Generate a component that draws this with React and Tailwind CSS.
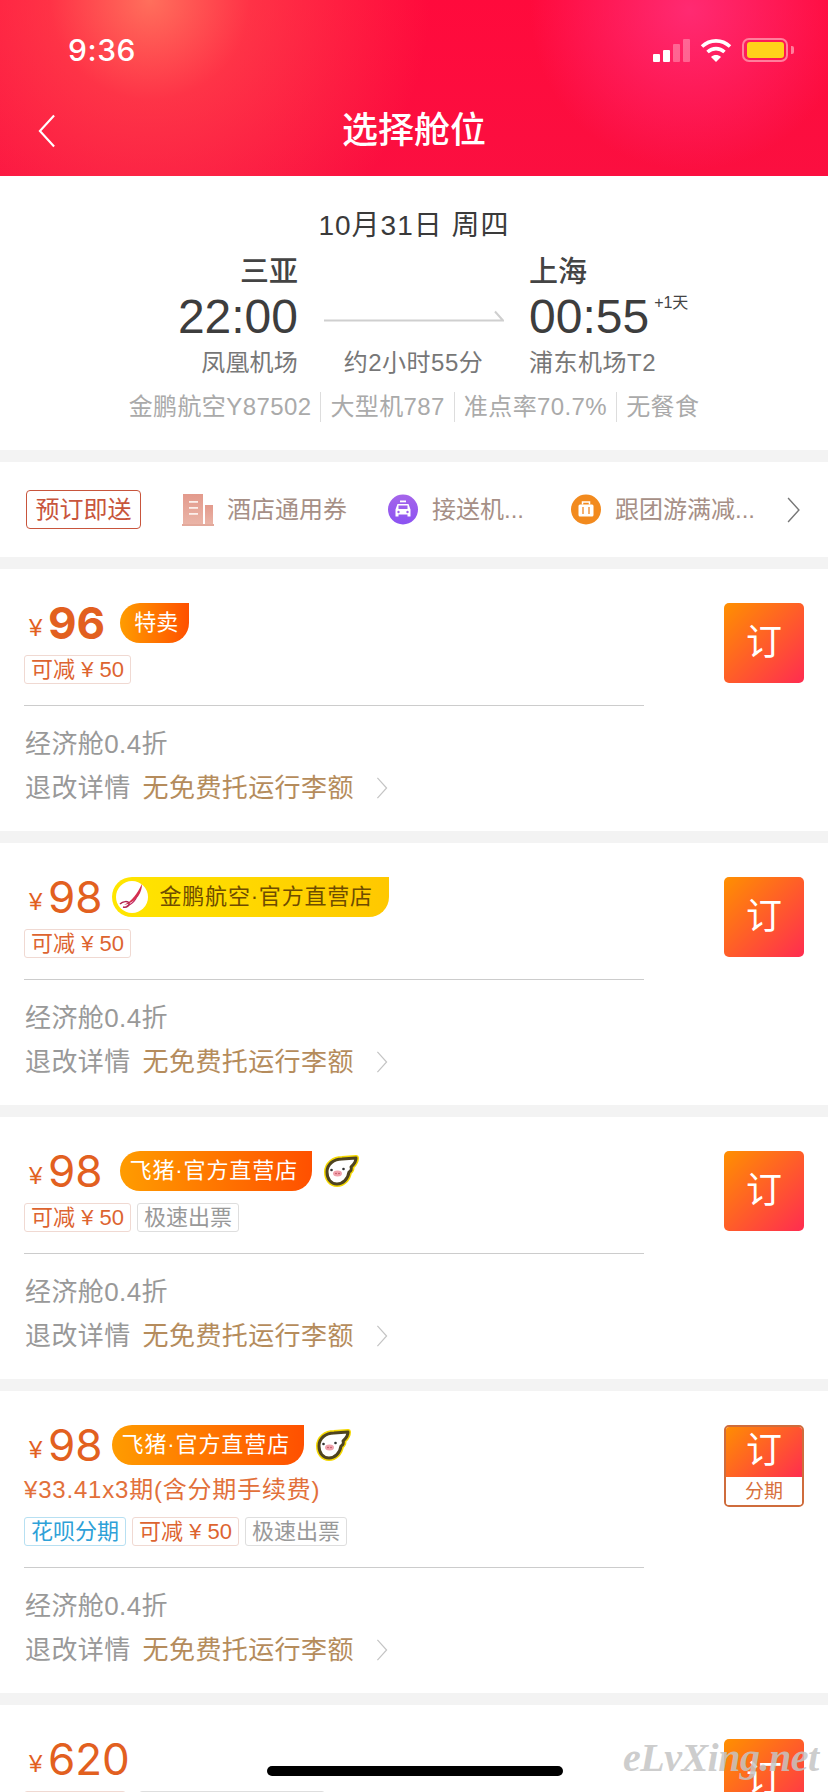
const SANS = "font-['Liberation_Sans','Noto_Sans_CJK_SC',sans-serif]";

function Chevron({ className, color, width = 1.6 }) {
  return (
    <svg viewBox="0 0 12 24" className={className} fill="none" stroke={color} strokeWidth={width}>
      <path d="M1 1l10 11L1 23" />
    </svg>
  );
}

function StatusIcons() {
  return (
    <div className="flex items-center">
      <svg width="37" height="23" viewBox="0 0 37 23" fill="#fff">
        <rect x="0" y="15" width="7" height="8" rx="1" />
        <rect x="10" y="11" width="7" height="12" rx="1" />
        <rect x="20" y="5" width="7" height="18" rx="1" opacity="0.3" />
        <rect x="30" y="0" width="7" height="23" rx="1" opacity="0.3" />
      </svg>
      <svg width="32" height="24" viewBox="0 0 32 24" fill="none" stroke="#fff" strokeWidth="3.6" className="ml-[10px]">
        <path d="M2 8.500C10 1 22 1 30 8.500" />
        <path d="M7.500 14C12.500 9.500 19.500 9.500 24.500 14" />
        <path d="M16 24l-5-5c3-2.600 7-2.600 10 0z" fill="#fff" stroke="none" />
      </svg>
      <div className="ml-[10px] flex items-center">
        <div className="flex h-[24px] w-[46px] items-center justify-center rounded-[7px] border-2 border-[#ff7f9c]">
          <div className="h-[16px] w-[37px] rounded-[3px] bg-[#ffd21a]" />
        </div>
        <div className="ml-[3px] h-[8px] w-[3px] rounded-r-[2px] bg-[#ff7f9c]" />
      </div>
    </div>
  );
}

function Header() {
  return (
    <div className="h-[176px] bg-[radial-gradient(circle_at_150px_0px,#ff6f5c_0,rgba(255,90,80,0.5)_100px,rgba(255,10,60,0)_280px),radial-gradient(circle_at_690px_10px,#ff2a72_0,rgba(255,10,60,0)_160px),linear-gradient(#ff0a3c,#fb0f40)]">
      <div className="flex h-[24px] translate-y-[38px] items-center justify-between pl-[68px] pr-[34px]">
        <span className="font-['Inter',sans-serif] text-[30px] font-medium leading-none tracking-[0.6px] text-white">9:36</span>
        <StatusIcons />
      </div>
      <div className="relative flex h-[88px] translate-y-[63px] items-center justify-center">
        <Chevron className="absolute left-[37px] top-[27px] h-[34px] w-[20px] -scale-x-100" color="#fff" width={1.5} />
        <span className={`${SANS} text-[36px] font-medium leading-none text-white`}>选择舱位</span>
      </div>
    </div>
  );
}

function FlightInfo() {
  const meta = ["金鹏航空Y87502", "大型机787", "准点率70.7%", "无餐食"];
  return (
    <div className={`${SANS} h-[274px] bg-white pt-[30px]`}>
      <div className="h-[40px] text-center text-[28px] leading-[40px] tracking-[1px] text-[#3a3a3a]">10月31日 周四</div>
      <div className="mt-[8px] flex">
        <div className="flex w-[298px] flex-col items-end">
          <div className="h-[36px] text-[29px] leading-[36px] font-medium text-[#444]">三亚</div>
          <div className="h-[54px] text-[48px] leading-[54px] text-[#3d3d3d]">22:00</div>
          <div className="mt-[2px] h-[34px] text-[24px] leading-[34px] tracking-[0.2px] text-[#777]">凤凰机场</div>
        </div>
        <div className="flex w-[231px] flex-col items-center">
          <svg width="180" height="14" viewBox="0 0 180 14" fill="none" stroke="#cfcfcf" strokeWidth="2" className="mt-[56px]">
            <path d="M0 10.500h179l-8-9" />
          </svg>
          <div className="mt-[22px] h-[34px] text-[24px] leading-[34px] tracking-[0.5px] text-[#777]">约2小时55分</div>
        </div>
        <div className="flex flex-col items-start">
          <div className="h-[36px] text-[29px] leading-[36px] font-medium text-[#444]">上海</div>
          <div className="flex h-[54px] items-start">
            <span className="text-[48px] leading-[54px] text-[#3d3d3d]">00:55</span>
            <span className="ml-[5px] mt-[3px] text-[16px] leading-[20px] text-[#444]">+1天</span>
          </div>
          <div className="mt-[2px] h-[34px] text-[24px] leading-[34px] tracking-[0.5px] text-[#777]">浦东机场T2</div>
        </div>
      </div>
      <div className="mt-[12px] flex h-[30px] items-center justify-center">
        {meta.map((m, i) => (
          <span
            key={m}
            className={`h-[30px] px-[9px] text-[24px] leading-[30px] tracking-[0.4px] text-[#aaa] ${i > 0 ? "border-l border-[#ddd]" : ""}`}
          >
            {m}
          </span>
        ))}
      </div>
    </div>
  );
}

function HotelIcon() {
  return (
    <svg width="32" height="32" viewBox="0 0 32 32" className="shrink-0">
      <defs>
        <linearGradient id="hotel" x1="0" y1="0" x2="0" y2="1">
          <stop offset="0" stopColor="#e39a8c" />
          <stop offset="1" stopColor="#eab5a8" />
        </linearGradient>
      </defs>
      <rect x="1" y="0" width="20" height="31" fill="url(#hotel)" />
      <rect x="23" y="11" width="8" height="20" fill="url(#hotel)" />
      <rect x="0" y="30" width="32" height="2" fill="#e3a99b" />
      <g fill="#fbeeea">
        <rect x="7" y="7" width="9" height="1.800" />
        <rect x="7" y="13" width="9" height="1.800" />
        <rect x="7" y="19" width="9" height="1.800" />
      </g>
    </svg>
  );
}

function CarIcon() {
  return (
    <svg width="30" height="31" viewBox="0 0 30 31" className="shrink-0">
      <defs>
        <linearGradient id="car" x1="0" y1="0" x2="0" y2="1">
          <stop offset="0" stopColor="#a565ea" />
          <stop offset="1" stopColor="#8b52f2" />
        </linearGradient>
      </defs>
      <circle cx="15" cy="15.500" r="15" fill="url(#car)" />
      <rect x="12" y="6.500" width="6" height="1.800" fill="#fff" />
      <path d="M9.500 10h11l2 5.500v7h-3v-2h-9v2h-3v-7z" fill="#fff" />
      <rect x="10.500" y="11.500" width="9" height="3.500" fill="#9d60ec" />
      <circle cx="10.500" cy="18" r="1.200" fill="#9d60ec" />
      <circle cx="19.500" cy="18" r="1.200" fill="#9d60ec" />
    </svg>
  );
}

function BagIcon() {
  return (
    <svg width="30" height="31" viewBox="0 0 30 31" className="shrink-0">
      <circle cx="15" cy="15.500" r="15" fill="#f28a1e" />
      <rect x="7.500" y="10.500" width="15" height="12" rx="1.500" fill="#fff" />
      <path d="M11.500 10.500V8h7v2.500" fill="none" stroke="#fff" strokeWidth="1.500" />
      <rect x="11" y="13" width="2" height="7" fill="#f5b06e" />
      <rect x="17" y="13" width="2" height="7" fill="#f5b06e" />
    </svg>
  );
}

function Benefits() {
  const textCls = "ml-[14px] text-[24px] leading-none text-[#a68f86] whitespace-nowrap";
  return (
    <div className={`${SANS} mt-[12px] flex h-[95px] items-center bg-white pl-[26px]`}>
      <span className="flex h-[39px] w-[115px] shrink-0 items-center justify-center rounded-[4px] border border-[#c8553c] text-[24px] leading-none text-[#c8553c]">
        预订即送
      </span>
      <div className="ml-[41px] flex items-center">
        <HotelIcon />
        <span className="ml-[13px] text-[24px] leading-none text-[#a68f86] whitespace-nowrap">酒店通用券</span>
      </div>
      <div className="ml-[41px] flex items-center">
        <CarIcon />
        <span className={textCls}>接送机...</span>
      </div>
      <div className="ml-[47px] flex items-center">
        <BagIcon />
        <span className={textCls}>跟团游满减...</span>
      </div>
      <Chevron className="ml-[31px] h-[26px] w-[15px] shrink-0" color="#777" width={1.3} />
    </div>
  );
}

function PigWing() {
  const wing = "M4 17C4 9 11 4 19 4L33 3C33 8 30 10 28 12C29 14 28 16 26 17C25 24 20 29 14 29C8 29 4 24 4 17z";
  return (
    <svg width="36" height="32" viewBox="0 0 36 32">
      <path d={wing} fill="#f5d800" stroke="#f5d800" strokeWidth="6" strokeLinejoin="round" />
      <path d={wing} fill="#fff" stroke="#4f4420" strokeWidth="3" strokeLinejoin="round" />
      <ellipse cx="14.500" cy="18.500" rx="4.500" ry="3" fill="#f2a3ad" />
      <circle cx="8.500" cy="15" r="1.300" fill="#333" />
      <circle cx="20.500" cy="14" r="1.300" fill="#333" />
      <circle cx="13" cy="18.500" r="0.800" fill="#b9505e" />
      <circle cx="16" cy="18.500" r="0.800" fill="#b9505e" />
    </svg>
  );
}

function JinpengLogo() {
  return (
    <svg width="32" height="32" viewBox="0 0 32 32" className="shrink-0">
      <circle cx="16" cy="16" r="16" fill="#fff" />
      <path d="M26 3c0 9-5 16-14 20l-4 1c8-4 13-11 18-21z" fill="#d6304e" />
      <path d="M23 9c-1 7-6 13-13 16 6 0 12-6 13-16z" fill="#c22a63" />
      <path d="M4 23c3-3 8-3 9-1 1 2-2 5-6 4" fill="none" stroke="#b3224f" strokeWidth="1.500" />
    </svg>
  );
}

const orangeBadge = "h-[40px] rounded-l-[20px] rounded-br-[20px] bg-[linear-gradient(90deg,#ff9c00,#ff5000)] text-white text-[22px] leading-[40px] whitespace-nowrap";

function FliggyBadge() {
  return <div className={`${orangeBadge} w-[192px] pl-[10px] tracking-[0.9px]`}>飞猪·官方直营店</div>;
}

function Tag({ kind, children, className = "" }) {
  const styles = {
    discount: "border-[#f0d9d2] text-[#dd6430]",
    gray: "border-[#dedede] text-[#999]",
    blue: "border-[#b7e0f2] text-[#2ea1d8]",
  };
  return (
    <span className={`flex h-[29px] items-center justify-center rounded-[3px] border text-[22px] leading-none whitespace-nowrap ${styles[kind]} ${className}`}>
      {children}
    </span>
  );
}

const discount = <Tag kind="discount" className="w-[107px]">可减 ¥ 50</Tag>;

function BookButton({ installment }) {
  if (installment) {
    return (
      <div className="h-[82px] w-[80px] shrink-0 overflow-hidden rounded-[5px] border-2 border-[#cf6c3c]">
        <div className="-mx-[2px] -mt-[2px] flex h-[52px] items-center justify-center bg-[linear-gradient(135deg,#ff9000,#ff2c50)] text-[36px] leading-none text-white">
          订
        </div>
        <div className="flex h-[28px] items-center justify-center bg-white text-[19px] leading-none text-[#d8703c]">分期</div>
      </div>
    );
  }
  return (
    <div className="flex h-[80px] w-[80px] shrink-0 items-center justify-center rounded-[5px] bg-[linear-gradient(135deg,#ff9000,#ff2c50)] text-[36px] leading-none text-white">
      订
    </div>
  );
}

function FareCard({ price, bold, badge, badgeGap, note, tags, installment }) {
  return (
    <div className={`${SANS} mt-[12px] flex items-start justify-between bg-white pl-[24px] pr-[24px] pt-[34px] ${installment ? "h-[302px]" : "h-[262px]"}`}>
      <div className="w-[620px]">
        <div className="flex h-[40px] items-center">
          <span className="ml-[5px] mt-[9px] w-[14px] text-[24px] leading-none text-[#e2601f]">¥</span>
          <span className={`ml-[5px] font-['Inter',sans-serif] text-[44px] leading-none text-[#e2601f] ${bold ? "font-bold" : "font-normal"}`}>
            {price}
          </span>
          {badge && <div style={{ marginLeft: badgeGap }} className="flex items-center">{badge}</div>}
        </div>
        {note && <div className="mt-[11px] h-[28px] text-[24px] leading-[28px] tracking-[0.8px] text-[#e2703a]">{note}</div>}
        <div className={`flex gap-[6px] ${note ? "mt-[13px]" : "mt-[12px]"}`}>{tags}</div>
        <div className="mt-[21px] h-px bg-[#ccc]" />
        <div className="ml-[1px] mt-[23px] h-[30px] text-[26px] leading-[30px] tracking-[0.4px] text-[#999]">经济舱0.4折</div>
        <div className="ml-[1px] mt-[14px] flex h-[30px] items-center text-[26px] leading-none tracking-[0.4px]">
          <span className="text-[#999]">退改详情</span>
          <span className="ml-[12px] text-[#b58c5c]">无免费托运行李额</span>
          <Chevron className="ml-[22px] h-[22px] w-[12px]" color="#c4c4c4" width={1.3} />
        </div>
      </div>
      <BookButton installment={installment} />
    </div>
  );
}

export default function App() {
  return (
    <div className="relative h-[1792px] w-[828px] overflow-hidden bg-[#f3f3f3]">
      <Header />
      <FlightInfo />
      <Benefits />
      <FareCard
        price="96"
        bold
        badgeGap="15px"
        badge={<div className={`${orangeBadge} w-[69px] pl-[14px]`}>特卖</div>}
        tags={discount}
      />
      <FareCard
        price="98"
        badgeGap="9px"
        badge={
          <div className="flex h-[40px] w-[277px] items-center rounded-l-[20px] rounded-br-[20px] bg-[linear-gradient(90deg,#ffe600,#ffc800)] pl-[4px]">
            <JinpengLogo />
            <span className="ml-[12px] text-[22px] leading-none tracking-[0.8px] whitespace-nowrap text-[#6e4c00]">金鹏航空·官方直营店</span>
          </div>
        }
        tags={discount}
      />
      <FareCard
        price="98"
        badgeGap="17px"
        badge={
          <>
            <FliggyBadge />
            <div className="ml-[11px]"><PigWing /></div>
          </>
        }
        tags={
          <>
            {discount}
            <Tag kind="gray" className="w-[102px]">极速出票</Tag>
          </>
        }
      />
      <FareCard
        price="98"
        installment
        badgeGap="9px"
        note="¥33.41x3期(含分期手续费)"
        badge={
          <>
            <FliggyBadge />
            <div className="ml-[11px]"><PigWing /></div>
          </>
        }
        tags={
          <>
            <Tag kind="blue" className="w-[102px]">花呗分期</Tag>
            {discount}
            <Tag kind="gray" className="w-[102px]">极速出票</Tag>
          </>
        }
      />
      <FareCard
        price="620"
        tags={
          <>
            <Tag kind="discount" className="w-[102px]">可减 ¥ 50</Tag>
            <Tag kind="gray" className="ml-[7px] w-[186px]">极速出票</Tag>
          </>
        }
      />
      {/* home indicator and watermark sit on top of the list */}
      <div className="absolute bottom-[16px] left-[267px] h-[10px] w-[296px] rounded-full bg-black" />
      <div className="absolute left-[623px] top-[1736px] font-['Liberation_Serif',serif] text-[40px] font-bold italic leading-[44px] tracking-[-0.5px] text-[#c4c4c4]/85">
        eLvXing.net
      </div>
    </div>
  );
}
